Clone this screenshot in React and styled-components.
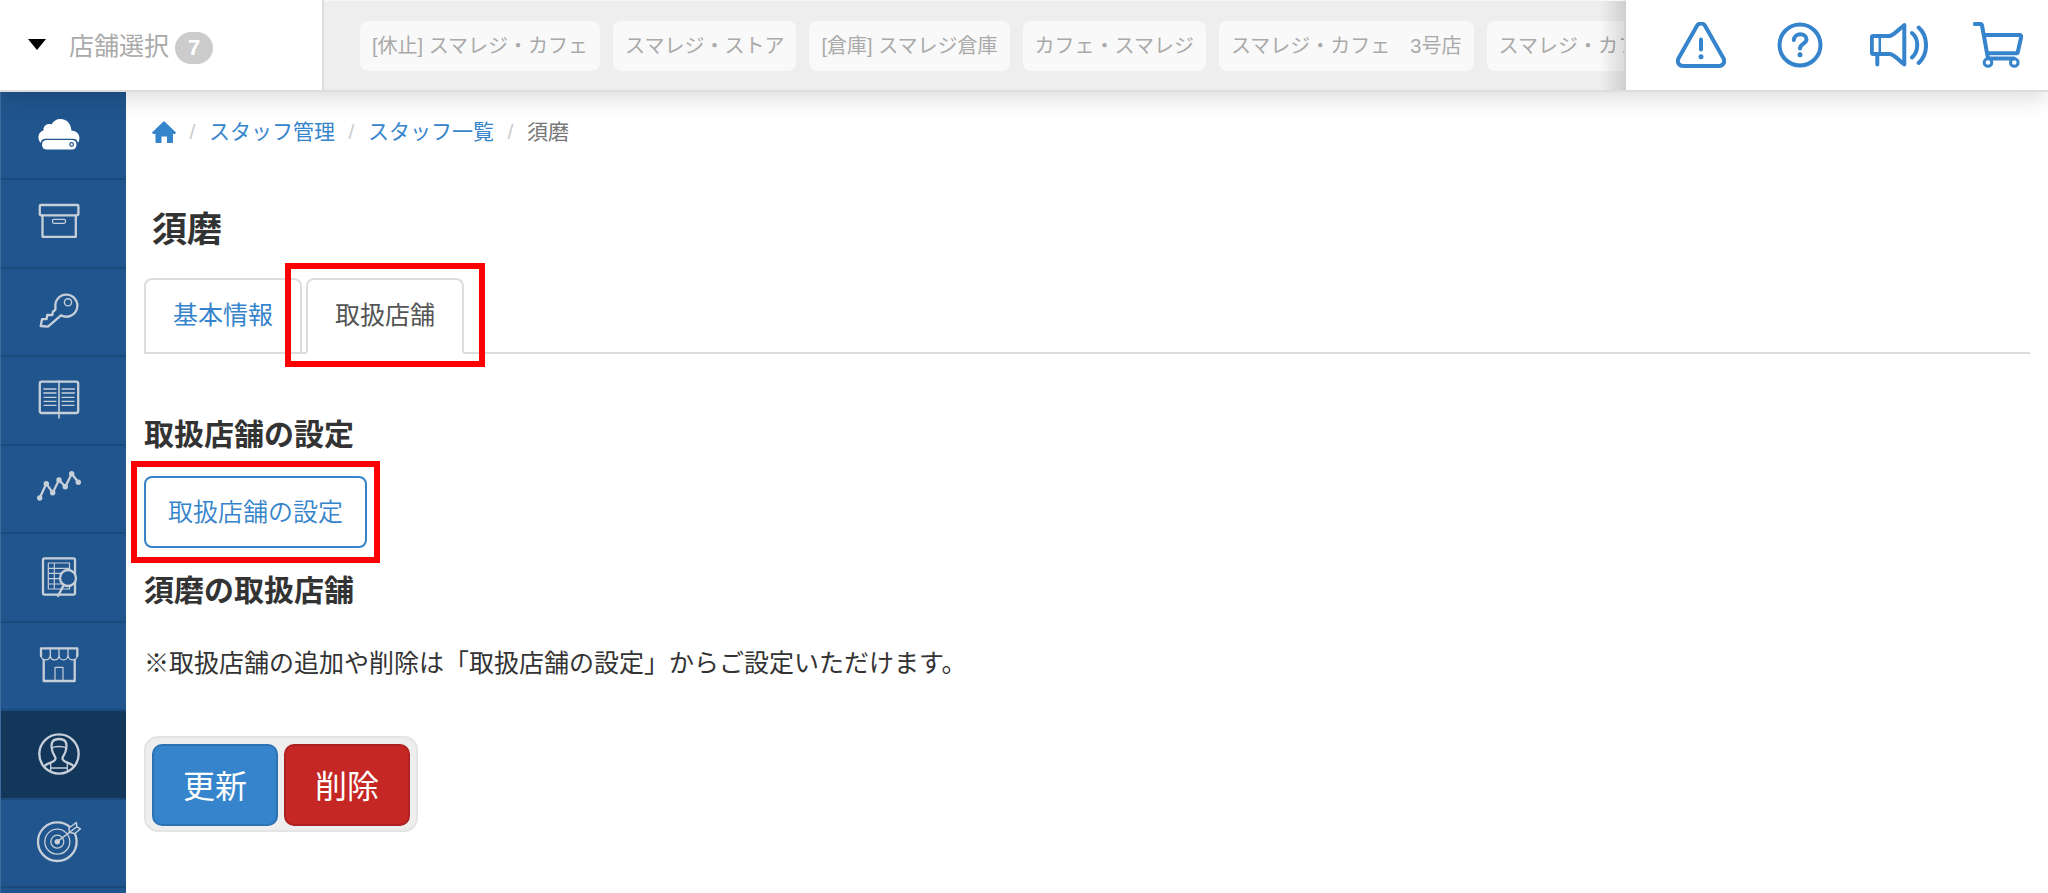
import React from "react";
import styled, { ThemeProvider, createGlobalStyle } from "styled-components";

const theme = {
  color: {
    blue: "#3684cb",
    red: "#c52724",
    navy: "#20558d",
    navyDark: "#12375b",
    navyLine: "#1b4a7c",
    text: "#333",
    muted: "#aaa",
    line: "#ddd",
    bar: "#eee",
    mark: "#ff0000",
  },
};

const stores = [
  "[休止] スマレジ・カフェ",
  "スマレジ・ストア",
  "[倉庫] スマレジ倉庫",
  "カフェ・スマレジ",
  "スマレジ・カフェ　3号店",
  "スマレジ・カフェ",
];

const CloudIcon = () => (
  <NavSvg viewBox="0 0 44 44">
    <g fill="#fff" stroke="none">
      <path d="M3.5 31C0 26 1 20 6.500 18.500C6 13.500 10.500 11 14.500 12.500C18.500 4 33.500 4.500 34.500 18.800C41.500 18.500 44.500 25.500 41 31C40.300 28 38.800 26.700 36 26.700H8.500C6 26.700 4.200 28 3.500 31Z" />
      <rect x="5" y="28" width="34.500" height="9.500" rx="4.500" />
    </g>
    <circle cx="34.600" cy="32.500" r="1.800" stroke="#20558d" strokeWidth="1.200" />
  </NavSvg>
);

const BoxIcon = () => (
  <NavSvg viewBox="0 0 44 44">
    <rect x="2.800" y="4" width="38.600" height="10.300" rx="1" />
    <path d="M5.500 14.500V35.800H38.800V14.500" />
    <rect x="15.500" y="18.300" width="13" height="4" rx="1.500" strokeWidth="1.300" />
  </NavSvg>
);

const KeyIcon = () => (
  <NavSvg viewBox="0 0 44 44">
    <path d="M18.500 18.500L18.200 21L16 22.500L15.300 26H10.200L9.600 30.200H5L3.700 37L11 37.600L24 26.300A11 11 0 1 0 18.500 18.500Z" />
    <circle cx="31" cy="13.300" r="3.600" strokeWidth="1.400" />
  </NavSvg>
);

const BookIcon = () => (
  <NavSvg viewBox="0 0 44 44">
    <rect x="2.800" y="3.700" width="38.400" height="31.300" rx="2" />
    <path d="M22 3V40" strokeWidth="1.600" />
    <path
      d="M6.700 11H19M6.700 15H19M7 19.300H19M7 23.300H19M7 27.300H19M25 11H37.500M25 15H37.500M25 19.300H37M25 23.300H37M25 27.300H37"
      strokeWidth="1.300"
    />
  </NavSvg>
);

const ChartIcon = () => (
  <NavSvg viewBox="0 0 44 44">
    <path d="M2.700 32L9.300 17.700L15.700 26.700L22 14L28.300 20.700L34.700 7.700L41.300 16.300" />
    <g fill="#c7cfd9" stroke="none">
      <circle cx="2.700" cy="32" r="2.700" />
      <circle cx="9.300" cy="17.700" r="2.700" />
      <circle cx="15.700" cy="26.700" r="2.700" />
      <circle cx="22" cy="14" r="2.700" />
      <circle cx="28.300" cy="20.700" r="2.700" />
      <circle cx="34.700" cy="7.700" r="2.700" />
      <circle cx="41.300" cy="16.300" r="2.700" />
    </g>
  </NavSvg>
);

const ReportIcon = () => (
  <NavSvg viewBox="0 0 44 44">
    <rect x="6" y="4.300" width="32" height="36.300" rx="1.500" />
    <path
      d="M11.300 9H32.500V35H11.300ZM11.300 14.300H32.500M11.300 19.300H32.500M11.300 24.700H32.500M11.300 30H32.500M17.300 9V35"
      strokeWidth="1.200"
    />
    <circle cx="31" cy="24" r="8" fill="#20558d" />
    <path d="M26.500 31.500L21 42" />
  </NavSvg>
);

const ShopIcon = () => (
  <NavSvg viewBox="0 0 44 44">
    <path d="M4 13V5.300H40.300V13" />
    <path
      d="M4 12C4 18.500 13.300 18.500 13.300 12C13.300 18.500 22 18.500 22 12C22 18.500 31 18.500 31 12C31 18.500 40.300 18.500 40.300 12M13.300 5.500V13M22 5.500V13M31 5.500V13"
      strokeWidth="1.300"
    />
    <path d="M6.700 17V38H37.700V17" />
    <path d="M18 38V24.300H26V38" strokeWidth="1.200" />
  </NavSvg>
);

const StaffIcon = () => (
  <NavSvg viewBox="0 0 44 44">
    <circle cx="22" cy="23" r="19.700" />
    <path d="M7.500 35C11.500 31 18.500 31.500 18.500 27.500C18.500 24.500 15.500 24 14.800 17.500C13.800 11 16 8 22 8C28 8 30.200 11 29.200 17.500C28.500 24 25.500 24.500 25.500 27.500C25.500 31.500 32.500 31 36.500 35" />
    <path d="M14.800 17C18 15 26 15 29.200 17M13.700 32V40M30.300 32V40M13.700 37H30.300" strokeWidth="1.300" />
  </NavSvg>
);

const TargetIcon = () => (
  <NavSvg viewBox="0 0 44 44">
    <circle cx="20.300" cy="21.700" r="19.300" />
    <circle cx="20.300" cy="21.700" r="12.500" strokeWidth="1.300" />
    <circle cx="20.300" cy="21.700" r="6.500" strokeWidth="1.300" />
    <path d="M32.500 12.500L32 8L39.300 2.500L39.800 6.800L43.500 8.800L38 13.500Z" fill="#20558d" strokeWidth="1.500" />
    <path d="M20.300 21.700L39.500 7" strokeWidth="1.500" />
    <circle cx="20.300" cy="21.700" r="2.700" fill="#c7cfd9" stroke="none" />
  </NavSvg>
);

const AlertIcon = () => (
  <ToolSvg width="50" height="46" viewBox="0 0 50 46">
    <path d="M21 3.800C22.700 .8 27.300 .8 29 3.800L47.300 36C49.300 39.800 47.500 44 43 44H7C2.500 44 .7 39.800 2.700 36Z" />
    <path d="M25 17.500V27.500" />
    <circle cx="25" cy="34.800" r="2.500" fill="#3684cb" stroke="none" />
  </ToolSvg>
);

const HelpIcon = () => (
  <ToolSvg width="46" height="46" viewBox="0 0 46 46">
    <circle cx="23" cy="23" r="20.500" />
    <path d="M16.800 18C17.200 10.500 29.500 10.300 29.500 17.500C29.500 21.800 23 21.500 23 26.500" />
    <circle cx="23" cy="32.700" r="2.500" fill="#3684cb" stroke="none" />
  </ToolSvg>
);

const NewsIcon = () => (
  <ToolSvg width="58" height="46" viewBox="0 0 58 46">
    <path d="M3 14H20C25 12.500 29 7 34.300 3V42.500C29 38.500 25 33 20 32H3C2 32 1.800 31.500 1.800 30.500V15.500C1.800 14.500 2 14 3 14Z" />
    <path d="M9.800 14V32" strokeWidth="2.500" />
    <path d="M7.300 33V42.500M42 11C49 16.500 49 29.500 42 35.500M48.700 5.500C58.500 14.500 58.500 32 48.700 41" />
  </ToolSvg>
);

const CartIcon = () => (
  <ToolSvg width="50" height="46" viewBox="0 0 50 46">
    <path d="M1.800 2H7.500C8.500 2 8.800 2.300 9 3.300L14.800 35.500M11 13H46.500C48 13 48.500 14 48.200 15L44.800 30C44.600 30.900 44 31.300 43 31.300H14" />
    <path d="M15 36.500H41" />
    <g strokeWidth="3">
      <circle cx="15" cy="40.500" r="3.800" fill="#fff" />
      <circle cx="41.300" cy="40.500" r="3.800" fill="#fff" />
    </g>
  </ToolSvg>
);

const HomeIcon = () => (
  <svg width="24" height="22" viewBox="0 0 24 22" aria-hidden="true">
    <path
      d="M12 0L24 11.500L23 13H21V21C21 21.700 20.700 22 20 22H15V15.500H9.500V22H4.500C3.800 22 3.500 21.700 3.500 21V13H1L0 11.500Z"
      fill="#3684cb"
    />
  </svg>
);

const navItems = [
  { label: "ホーム", Icon: CloudIcon },
  { label: "商品", Icon: BoxIcon },
  { label: "権限", Icon: KeyIcon },
  { label: "台帳", Icon: BookIcon },
  { label: "売上分析", Icon: ChartIcon },
  { label: "レポート", Icon: ReportIcon },
  { label: "店舗", Icon: ShopIcon },
  { label: "スタッフ", Icon: StaffIcon, active: true },
  { label: "目標", Icon: TargetIcon },
];

const tools = [
  { label: "警告", Icon: AlertIcon },
  { label: "ヘルプ", Icon: HelpIcon },
  { label: "お知らせ", Icon: NewsIcon },
  { label: "カート", Icon: CartIcon },
];

const App = () => {
  return (
    <ThemeProvider theme={theme}>
      <GlobalStyle />
      <Page>
        <Header>
          <StoreSelect type="button">
            <Caret />
            店舗選択
            <Badge>7</Badge>
          </StoreSelect>
          <StoreStrip>
            {stores.map((store, i) => (
              <StoreChip type="button" key={i}>
                {store}
              </StoreChip>
            ))}
          </StoreStrip>
          <Tools>
            {tools.map(({ label, Icon }) => (
              <Tool href="#" key={label} aria-label={label}>
                <Icon />
              </Tool>
            ))}
          </Tools>
        </Header>
        <Body>
          <Sidebar>
            {navItems.map(({ label, Icon, active }) => (
              <NavItem href="#" key={label} aria-label={label} $active={active}>
                <Icon />
              </NavItem>
            ))}
          </Sidebar>
          <Main>
            <Breadcrumb>
              <a href="#" aria-label="ホーム">
                <HomeIcon />
              </a>
              <Slash>/</Slash>
              <a href="#">スタッフ管理</a>
              <Slash>/</Slash>
              <a href="#">スタッフ一覧</a>
              <Slash>/</Slash>
              <span>須磨</span>
            </Breadcrumb>
            <Title>須磨</Title>
            <Tabs>
              <Tab href="#">基本情報</Tab>
              <Marked $x="21px" $y="15px">
                <Tab href="#" $active>
                  取扱店舗
                </Tab>
              </Marked>
            </Tabs>
            <Heading>取扱店舗の設定</Heading>
            <Marked $x="13px" $y="15px">
              <OutlineButton type="button">取扱店舗の設定</OutlineButton>
            </Marked>
            <Heading $second>須磨の取扱店舗</Heading>
            <Note>※取扱店舗の追加や削除は「取扱店舗の設定」からご設定いただけます。</Note>
            <Actions>
              <ActionButton type="button">更新</ActionButton>
              <ActionButton type="button" $danger>
                削除
              </ActionButton>
            </Actions>
          </Main>
        </Body>
      </Page>
    </ThemeProvider>
  );
};

const GlobalStyle = createGlobalStyle`
  * {
    box-sizing: border-box;
  }
  body {
    margin: 0;
    background: #fff;
    color: ${theme.color.text};
    font-family: "Liberation Sans", "Noto Sans CJK JP", sans-serif;
    font-size: 25px;
  }
  a {
    color: ${theme.color.blue};
    text-decoration: none;
  }
  button {
    font-family: inherit;
    cursor: pointer;
  }
`;

const Page = styled.div`
  display: flex;
  flex-direction: column;
  min-height: 100vh;
`;

const Header = styled.header`
  position: relative;
  z-index: 1;
  display: flex;
  height: 92px;
  background: #fff;
  border-bottom: 2px solid ${({ theme }) => theme.color.line};
  box-shadow: 0 4px 24px rgba(0, 0, 0, 0.16);
`;

const StoreSelect = styled.button`
  display: flex;
  flex: none;
  align-items: center;
  width: 324px;
  padding: 0 28px 2px;
  background: #fff;
  border: 0;
  border-right: 2px solid ${({ theme }) => theme.color.line};
  color: ${({ theme }) => theme.color.muted};
  font-size: 25px;
`;

const Caret = styled.span`
  margin-right: 23px;
  border: 9px solid transparent;
  border-top: 11px solid #000;
  border-bottom: 0;
`;

const Badge = styled.span`
  margin: 8px 0 0 6px;
  padding: 0 13px;
  border-radius: 16px;
  background: #ccc;
  color: #fff;
  font-size: 22px;
  font-weight: bold;
  line-height: 32px;
`;

const StoreStrip = styled.div`
  position: relative;
  display: flex;
  flex: 1;
  gap: 13px;
  align-items: center;
  min-width: 0;
  padding-left: 36px;
  overflow: hidden;
  background: ${({ theme }) => theme.color.bar};
  border-top: 1px solid #f7f7f7;
  border-right: 2px solid #d0d0d0;

  &::after {
    content: "";
    position: absolute;
    top: 0;
    right: 0;
    bottom: 0;
    width: 24px;
    background: linear-gradient(to right, rgba(0, 0, 0, 0), rgba(0, 0, 0, 0.12));
  }
`;

const StoreChip = styled.button`
  flex: none;
  height: 50px;
  padding: 0 12px 2px;
  border: 0;
  border-radius: 8px;
  background: #f9f9f9;
  color: ${({ theme }) => theme.color.muted};
  font-size: 20px;
  white-space: nowrap;
`;

const Tools = styled.nav`
  display: flex;
  flex: none;
  padding: 0 1px 0 25px;
`;

const Tool = styled.a`
  display: flex;
  align-items: center;
  justify-content: center;
  width: 99px;
`;

const ToolSvg = styled.svg.attrs({ "aria-hidden": true })`
  fill: none;
  stroke: ${({ theme }) => theme.color.blue};
  stroke-width: 4px;
  stroke-linecap: round;
  stroke-linejoin: round;
`;

const Body = styled.div`
  display: flex;
  flex: 1;
`;

const Sidebar = styled.nav`
  display: flex;
  flex: none;
  flex-direction: column;
  width: 126px;
  padding-bottom: 5px;
  background: ${({ theme }) => theme.color.navy};
  border-left: 1px solid #3d6b9c;
`;

const NavItem = styled.a`
  display: flex;
  flex: 1;
  align-items: center;
  justify-content: center;
  min-height: 88px;
  padding: 0 9px 2px 0;
  border-bottom: 2px solid ${({ theme }) => theme.color.navyLine};
  background: ${({ theme, $active }) => ($active ? theme.color.navyDark : "none")};
`;

const NavSvg = styled.svg.attrs({ "aria-hidden": true })`
  width: 44px;
  height: 44px;
  overflow: visible;
  fill: none;
  stroke: #c7cfd9;
  stroke-width: 2.3px;
  stroke-linecap: round;
  stroke-linejoin: round;
`;

const Main = styled.main`
  flex: 1;
  min-width: 0;
  padding: 25px 18px;
`;

const Breadcrumb = styled.nav`
  display: flex;
  align-items: center;
  padding-left: 8px;
  color: #777;
  font-size: 21px;
  line-height: 30px;

  svg {
    display: block;
  }
`;

const Slash = styled.span`
  width: 33px;
  color: #ccc;
  text-align: center;
`;

const Title = styled.h1`
  margin: 63px 0 28px;
  padding-left: 8px;
  font-size: 35px;
  line-height: 40px;
`;

const Tabs = styled.div`
  display: flex;
  gap: 4px;
  border-bottom: 2px solid ${({ theme }) => theme.color.line};
`;

const Tab = styled.a`
  display: block;
  height: 76px;
  margin-bottom: -2px;
  padding: 0 27px;
  border: 2px solid ${({ theme }) => theme.color.line};
  border-bottom-color: ${({ theme, $active }) => ($active ? "#fff" : theme.color.line)};
  border-radius: 8px 8px 0 0;
  background: #fff;
  color: ${({ theme, $active }) => ($active ? "#555" : theme.color.blue)};
  line-height: 70px;
`;

/* red frame laid round the part it wraps */
const Marked = styled.div`
  position: relative;
  width: fit-content;

  &::after {
    content: "";
    position: absolute;
    top: -${({ $y }) => $y};
    right: -${({ $x }) => $x};
    bottom: -${({ $y }) => $y};
    left: -${({ $x }) => $x};
    border: 6px solid ${({ theme }) => theme.color.mark};
    pointer-events: none;
  }
`;

const Heading = styled.h2`
  margin: ${({ $second }) => ($second ? "23px 0 32px" : "61px 0 21px")};
  font-size: 30px;
  line-height: 40px;
`;

const OutlineButton = styled.button`
  display: block;
  height: 72px;
  padding: 0 22px 5px;
  border: 2px solid ${({ theme }) => theme.color.blue};
  border-radius: 8px;
  background: #fff;
  color: ${({ theme }) => theme.color.blue};
  font-size: 25px;
  font-weight: 350;
`;

const Note = styled.p`
  margin: 0 0 53px;
  line-height: 40px;
`;

const Actions = styled.div`
  display: flex;
  gap: 6px;
  width: fit-content;
  padding: 6px 6px 4px;
  border: 2px solid #e4e4e4;
  border-radius: 14px;
  background: ${({ theme }) => theme.color.bar};
`;

const ActionButton = styled.button`
  height: 82px;
  padding: 0 29px 3px;
  border: 2px solid ${({ $danger }) => ($danger ? "#ad2220" : "#2c72b4")};
  border-radius: 10px;
  background: ${({ theme, $danger }) => ($danger ? theme.color.red : theme.color.blue)};
  color: #fff;
  font-size: 32px;
`;

export default App;
